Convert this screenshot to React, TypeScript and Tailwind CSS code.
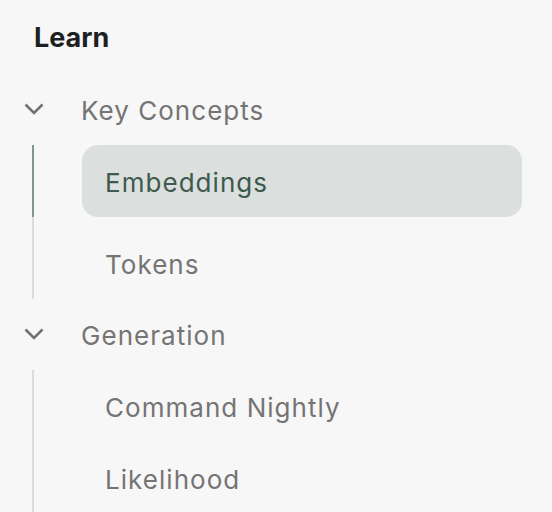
import React from "react";

function Chevron() {
  return (
    <svg width="20" height="12" viewBox="0 0 20 12" fill="none" className="shrink-0">
      <polyline points="1.5,1.5 10,10 18.5,1.5" stroke="#717171" strokeWidth="2.6" strokeLinecap="butt" strokeLinejoin="miter" />
    </svg>
  );
}

function Item({ label, active = false }: { label: string; active?: boolean }) {
  return (
    <div
      className={
        active
          ? "-ml-[2px] flex h-[72px] border-l-2 border-[#7e978e] pl-[48px] mb-[10px]"
          : "flex h-[72px] pl-[48px]"
      }
    >
      <div
        className={
          active
            ? "flex h-full w-[440px] items-center rounded-[16px] bg-[#dbdfdd] pl-[23px] text-[#3d5a4d]"
            : "flex h-full w-[440px] items-center rounded-[16px] pl-[23px] text-[#747474]"
        }
      >
        <span className="pt-[4px] text-[26px] leading-[32px] tracking-[0.04em]">{label}</span>
      </div>
    </div>
  );
}

function Group({ label, items, activeIndex }: { label: string; items: string[]; activeIndex?: number }) {
  return (
    <div>
      <div className="flex h-[72px] items-center">
        <Chevron />
        <span className="ml-[37px] pt-[4px] text-[26px] leading-[32px] tracking-[0.04em] text-[#747474]">{label}</span>
      </div>
      <div className="ml-[8px] border-l-2 border-[#dcdcdc]">
        {items.map((it, i) => (
          <Item key={it} label={it} active={i === activeIndex} />
        ))}
      </div>
    </div>
  );
}

export default function App() {
  return (
    <div
      className="h-[512px] w-[552px] overflow-hidden bg-[#f7f7f7] pl-[24px]"
      style={{ fontFamily: "Inter, 'Noto Sans', sans-serif" }}
    >
      <div className="h-[73px] pt-[22px] pl-[10px]">
        <div className="text-[27px] font-bold leading-[32px] text-[#1d1f22]">Learn</div>
      </div>
      <Group label="Key Concepts" items={["Embeddings", "Tokens"]} activeIndex={0} />
      <div className="-mt-px">
        <Group label="Generation" items={["Command Nightly", "Likelihood"]} />
      </div>
    </div>
  );
}
